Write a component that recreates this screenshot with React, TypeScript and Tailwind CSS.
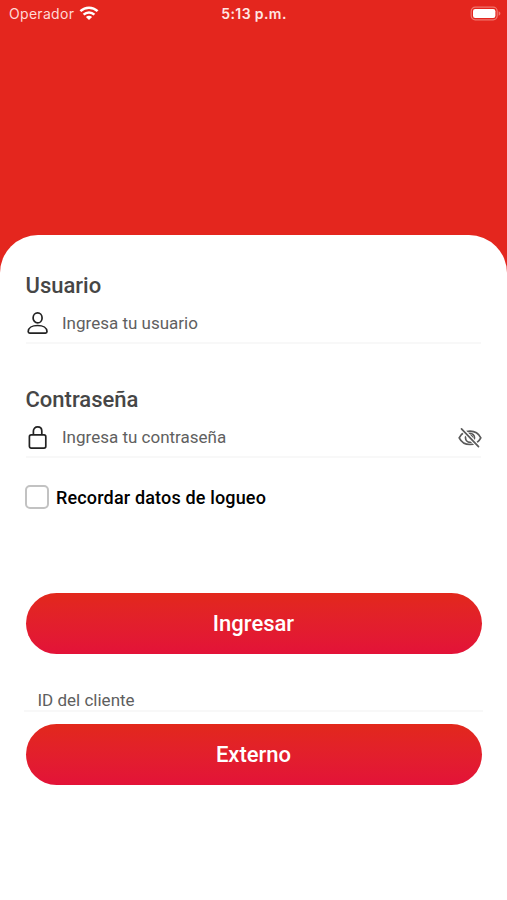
import React from 'react';

function WifiIcon() {
  return (
    <svg width="20" height="15" viewBox="0 0 20 15" fill="none" stroke="#fff" strokeWidth="2.5">
      <path d="M1.4 5.2C6.3 .6 13.7 .6 18.6 5.2" />
      <path d="M4.6 8.6C7.7 5.7 12.3 5.7 15.4 8.6" />
      <path d="M10 14L6.9 10.9C8.7 9.3 11.3 9.3 13.1 10.9Z" fill="#fff" stroke="none" />
    </svg>
  );
}

function BatteryIcon() {
  return (
    <svg width="31" height="16" viewBox="0 0 31 16" fill="none">
      <rect x="1.2" y="1.2" width="26" height="12.6" rx="4" stroke="#f0766f" strokeWidth="1.2" />
      <rect x="3" y="3" width="22.4" height="9" rx="2.2" fill="#fff" />
      <path d="M28.6 5.3C31 6.1 31 8.9 28.6 9.7Z" fill="#f0766f" />
    </svg>
  );
}

function UserIcon() {
  return (
    <svg width="24" height="26" viewBox="0 0 24 26" fill="none" stroke="#222" strokeWidth="1.7" strokeLinejoin="round">
      <ellipse cx="11.6" cy="7.9" rx="4.5" ry="5" />
      <path d="M2.2 21.6C2.2 17.9 6.1 15.5 11.6 15.5S21 17.9 21 21.6C21 22.7 20.5 23.2 19.5 23.2H3.7C2.7 23.2 2.2 22.7 2.2 21.6Z" />
    </svg>
  );
}

function LockIcon() {
  return (
    <svg width="24" height="26" viewBox="0 0 24 26" fill="none" stroke="#222" strokeWidth="1.7">
      <rect x="3.4" y="10.9" width="16.4" height="13.2" rx="1.8" />
      <path d="M7.4 10.9V7.1C7.4 4.6 9.2 2.9 11.6 2.9S15.8 4.6 15.8 7.1V10.9" />
    </svg>
  );
}

function EyeOffIcon() {
  return (
    <svg width="24" height="22" viewBox="0 0 24 22" fill="none" stroke="#5a5a5a" strokeWidth="1.7" strokeLinecap="round">
      <path d="M1.2 11.8C5.6 2.9 18.4 2.9 22.8 11.8C18.4 20.7 5.6 20.7 1.2 11.8Z" />
      <circle cx="12" cy="11.8" r="4.5" />
      <path d="M12.5 9.3A2.4 2.4 0 0 1 14.5 11.6" />
      {/* Gap on both sides of the slash */}
      <path d="M3.5 2.8L20.5 20.6" stroke="#fff" strokeWidth="4.2" />
      <path d="M3.5 2.8L20.5 20.6" />
    </svg>
  );
}

interface FieldProps {
  label: string;
  placeholder: string;
  icon: React.ReactNode;
  action?: React.ReactNode;
}

function Field({ label, placeholder, icon, action }: FieldProps) {
  return (
    <div className="h-[84px]">
      <h2 className="-ml-[0.5px] text-[22px] leading-[26px] font-medium text-[#464646]">{label}</h2>
      <div className="mt-[8px] h-[37px] flex items-center border-b-2 border-[#f8f8f8] pb-[3px]">
        {icon}
        <span className="ml-[12px] text-[17px] leading-5 text-[#606060]">{placeholder}</span>
        {action && <span className="ml-auto -mr-px">{action}</span>}
      </div>
    </div>
  );
}

function GradientButton({ children }: { children: React.ReactNode }) {
  return (
    <button className="block w-[456px] h-[61px] rounded-full bg-linear-to-b from-[#e2281b] to-[#e31238] pr-[1px] text-[22px] font-medium text-white">
      {children}
    </button>
  );
}

export default function App() {
  return (
    <div className="w-[507px] h-[900px] flex flex-col bg-[#e4261e] font-['Roboto',sans-serif] overflow-hidden">
      {/* Status bar */}
      <div className="h-[27px] shrink-0 grid grid-cols-3 items-center pl-[9px] pr-[6px] font-['Inter',sans-serif] text-white">
        <div className="flex items-center gap-[5px]">
          <span className="text-[14px] tracking-[0.3px] text-[#ffd9d6]">Operador</span>
          <WifiIcon />
        </div>
        <span className="-ml-[2px] text-center text-[14px] tracking-[0.4px] font-semibold text-[#ffe6e4]">5:13 p.m.</span>
        <div className="flex justify-end">
          <BatteryIcon />
        </div>
      </div>

      {/* Login card */}
      <main className="mt-[208px] flex-1 bg-white rounded-t-[38px] px-[26px] pt-[38px]">
        <Field label="Usuario" placeholder="Ingresa tu usuario" icon={<UserIcon />} />
        <div className="mt-[30px]">
          <Field label="Contraseña" placeholder="Ingresa tu contraseña" icon={<LockIcon />} action={<EyeOffIcon />} />
        </div>

        <label className="mt-[14px] h-[24px] flex items-center">
          <span className="-ml-px w-[24px] h-[24px] rounded-[5px] border-2 border-[#c2c2c2]"></span>
          <span className="ml-[7px] text-[18px] tracking-[0.16px] font-medium text-black">Recordar datos de logueo</span>
        </label>

        <div className="mt-[84px]">
          <GradientButton>Ingresar</GradientButton>
        </div>

        <div className="-mx-[2px] mt-[33px] h-[25px] pl-[13.5px] border-b-2 border-[#f8f8f8] text-[17px] leading-[26px] text-[#5e5e5e]">
          ID del cliente
        </div>
        <div className="mt-[12px]">
          <GradientButton>Externo</GradientButton>
        </div>
      </main>
    </div>
  );
}
